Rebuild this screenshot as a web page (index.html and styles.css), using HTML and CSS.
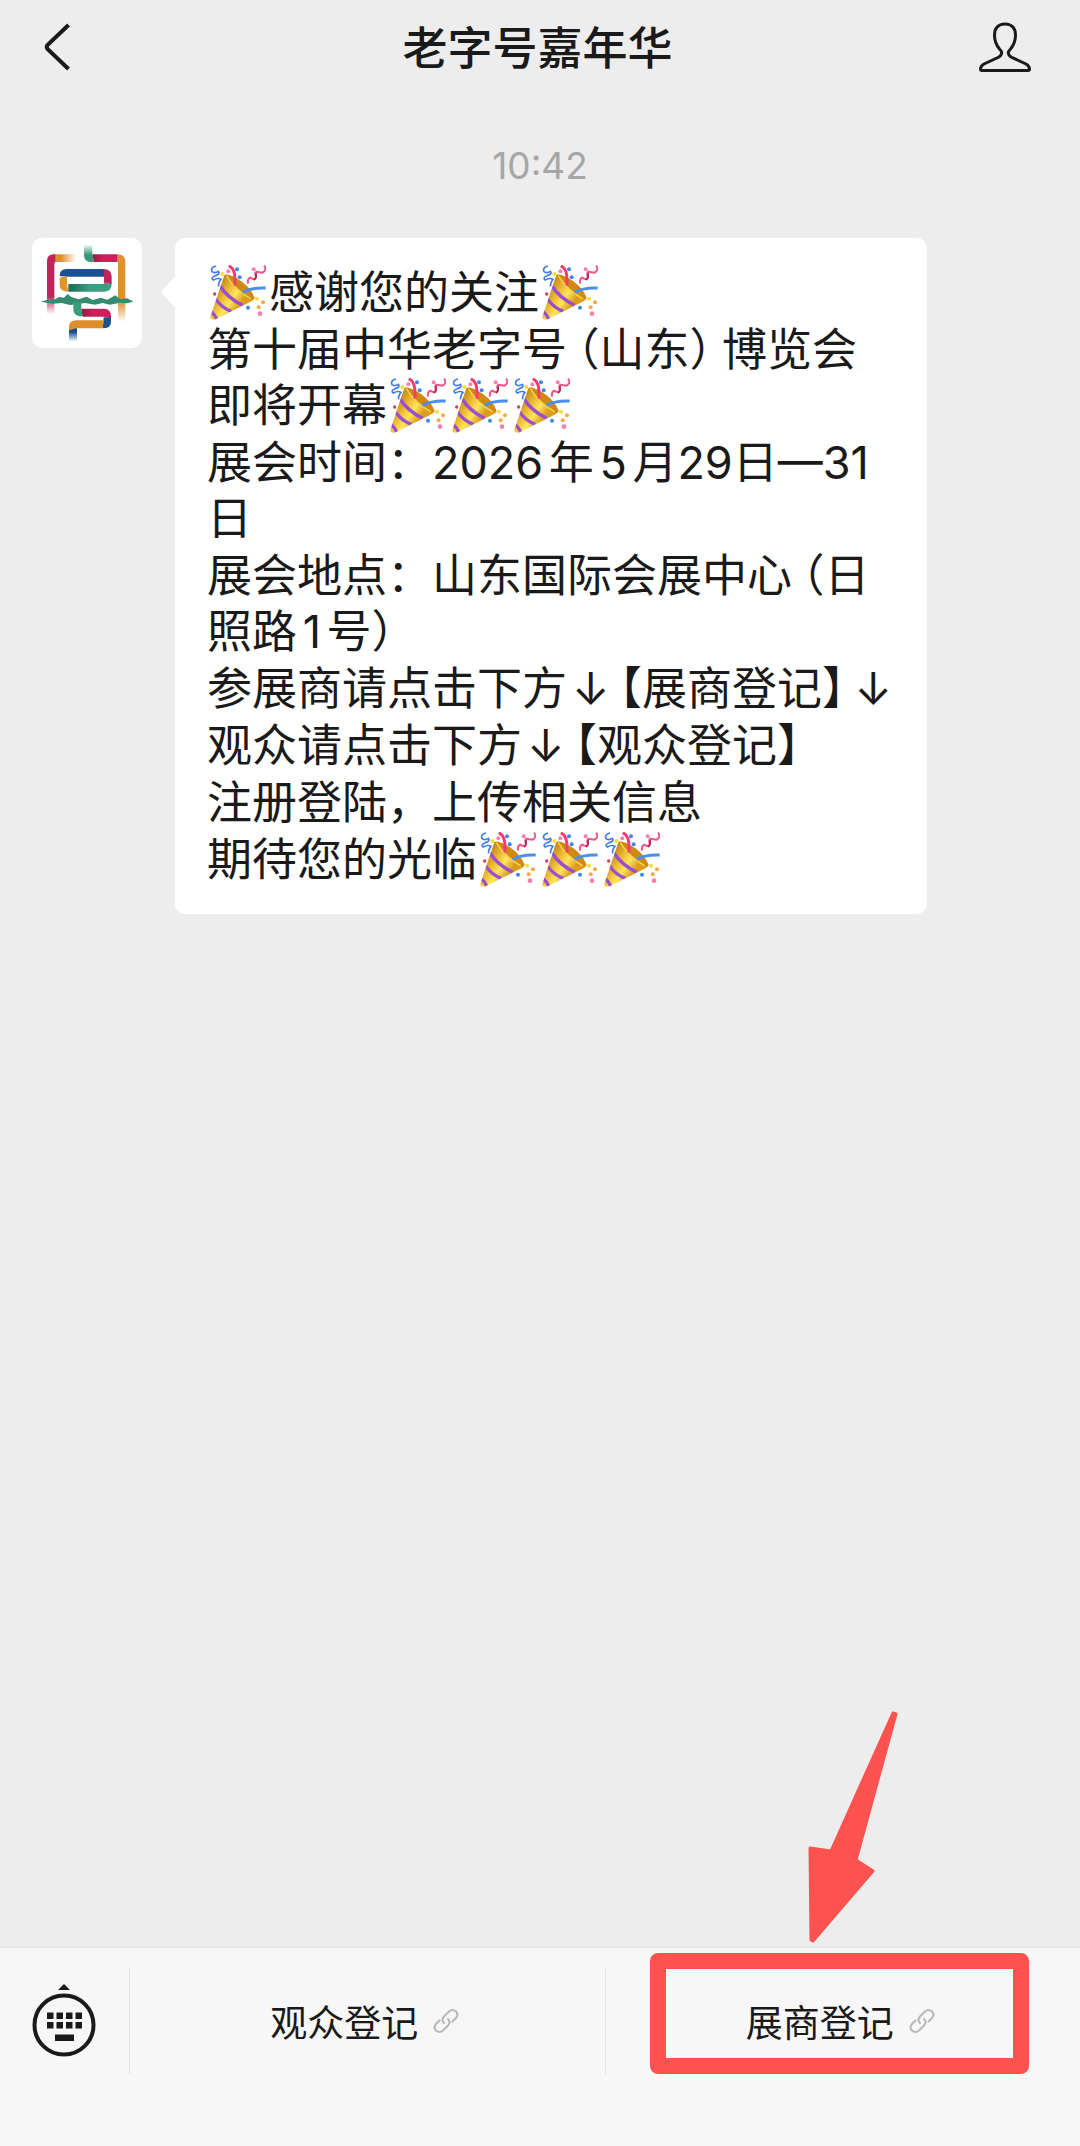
FILE: index.html
```html
<!DOCTYPE html>
<html lang="zh-CN">
<head>
    <meta charset="UTF-8">
    <meta name="viewport" content="width=device-width, initial-scale=1.0">
    <title>老字号嘉年华</title>
    <link rel="stylesheet" href="styles.css">
</head>
<body>
    <!-- 图标定义 -->
    <svg class="sprite" aria-hidden="true">
        <defs>
            <linearGradient id="cone" gradientUnits="userSpaceOnUse" x1="48" y1="105" x2="115" y2="150">
                <stop offset="0" stop-color="#c98f1c"/>
                <stop offset="0.35" stop-color="#eebc35"/>
                <stop offset="0.65" stop-color="#ffe65a"/>
                <stop offset="1" stop-color="#dc9d1e"/>
            </linearGradient>
            <clipPath id="coneClip">
                <path d="M71 58 L29 184 Q30 194 42 192 L154 136 Q160 133 161 127 Q130 104 112 80 Q92 62 71 58Z"/>
            </clipPath>
            <symbol id="popper" viewBox="28 28 168 168">
                <path d="M71 58 L29 184 Q30 194 42 192 L154 136 Q160 133 161 127 Q150 100 125 80 Q92 56 71 58Z" fill="url(#cone)"/>
                <path d="M73 56 Q94 57 122 77 Q152 99 162 127 Q158 134 148 128 Q108 108 73 56Z" fill="#cf8a13"/>
                <path d="M77 60 Q104 104 150 129" fill="none" stroke="#f8d452" stroke-width="4"/>
                <g clip-path="url(#coneClip)" fill="none" stroke="#9b4fd0" stroke-width="10">
                    <path d="M58 91 Q80 126 126 149"/>
                    <path d="M44 129 Q62 156 92 167"/>
                    <path d="M30 166 Q40 174 50 193"/>
                </g>
                <path d="M84 31 Q106 36 103 90" fill="none" stroke="#f43c6c" stroke-width="9"/>
                <path d="M126 110 Q152 95 195 97" fill="none" stroke="#4c8df0" stroke-width="9"/>
                <path d="M46 31 Q28 36 34 48 Q42 54 53 47 Q60 55 44 60 Q28 66 38 73 Q52 65 61 71 Q52 83 54 92" fill="none" stroke="#3d7ce8" stroke-width="5"/>
                <path d="M190 30 Q200 42 186 51 Q176 50 167 48 Q161 52 166 64 Q163 75 149 66 Q140 68 142 84" fill="none" stroke="#f2558a" stroke-width="6"/>
                <path d="M166 52 Q168 68 160 73" fill="none" stroke="#b62350" stroke-width="5"/>
                <g fill="#3f84ee">
                    <circle cx="109" cy="41" r="6"/>
                    <circle cx="117" cy="65" r="6"/>
                    <circle cx="142" cy="156" r="6"/>
                </g>
                <g fill="#f77fb4">
                    <circle cx="83" cy="47" r="6"/>
                    <circle cx="159" cy="41" r="6"/>
                    <circle cx="178" cy="174" r="7"/>
                </g>
                <circle cx="42" cy="115" r="5" fill="#e23763"/>
                <circle cx="65" cy="55" r="6" fill="#f6de35"/>
                <circle cx="169" cy="129" r="6" fill="#f6de35"/>
                <circle cx="187" cy="140" r="6" fill="#f7a93d"/>
                <circle cx="174" cy="155" r="6" fill="#f7a93d"/>
            </symbol>
            <symbol id="link" viewBox="0 0 26 26">
                <path d="M6.500 12.500 L3 16 Q0 19.500 3 22.500 Q6.500 25.500 10 22.500 L15 17.500 Q18 14 15 11 M11 15 Q8 12 11 8.500 L16 3.500 Q19.500 0.500 23 3.500 Q26 6.500 23 10 L19.500 13.500" fill="none" stroke="currentColor" stroke-width="2" stroke-linecap="round"/>
            </symbol>
        </defs>
    </svg>

    <header class="header">
        <button class="icon-btn" aria-label="返回">
            <svg class="back-icon" viewBox="0 0 26 48"><path d="M24.500 2 L3.500 22 Q2 24 3.500 26 L24.500 46" fill="none" stroke="currentColor" stroke-width="4"/></svg>
        </button>
        <h1 class="title">老字号嘉年华</h1>
        <button class="icon-btn" aria-label="公众号资料">
            <svg class="person-icon" viewBox="0 0 52 50"><path d="M26 2 C19 2 15.500 6.500 15.500 13 C15.500 19 17.500 23.500 20.500 27 C23.500 30 23.500 32.500 20 35 L5 42 C2.500 43.500 1.500 45 1.500 47 Q1.500 48.500 3 48.500 H49 Q50.500 48.500 50.500 47 C50.500 45 49.500 43.500 47 42 L32 35 C28.500 32.500 28.500 30 31.500 27 C34.500 23.500 36.500 19 36.500 13 C36.500 6.500 33 2 26 2Z" fill="none" stroke="currentColor" stroke-width="3"/></svg>
        </button>
    </header>

    <main class="chat">
        <time class="time">10:42</time>

        <div class="message">
            <svg class="avatar" viewBox="36 39 330 330" role="img" aria-label="老字号嘉年华">
                <defs>
                    <linearGradient id="fadeOrangeR"><stop offset="0.3" stop-color="#de8e2d"/><stop offset="1" stop-color="#de8e2d" stop-opacity="0"/></linearGradient>
                    <linearGradient id="fadeRed" x2="0" y2="1"><stop offset="0.7" stop-color="#c0225a"/><stop offset="1" stop-color="#c0225a" stop-opacity="0"/></linearGradient>
                    <linearGradient id="fadeOrange" x2="0" y2="1"><stop offset="0.7" stop-color="#e0902d"/><stop offset="1" stop-color="#e0902d" stop-opacity="0"/></linearGradient>
                    <linearGradient id="fadeGreen" x2="0" y2="1"><stop offset="0" stop-color="#36977a" stop-opacity="0"/><stop offset="0.6" stop-color="#36977a"/></linearGradient>
                    <linearGradient id="fadeBlue" x2="0" y2="1"><stop offset="0.3" stop-color="#17508f"/><stop offset="1" stop-color="#17508f" stop-opacity="0"/></linearGradient>
                    <linearGradient id="redBar"><stop offset="0" stop-color="#8f1d3f"/><stop offset="0.4" stop-color="#c9215a"/></linearGradient>
                    <linearGradient id="greenBar"><stop offset="0" stop-color="#1d6b54"/><stop offset="0.5" stop-color="#3a9e80"/></linearGradient>
                </defs>
                <path d="M103 88 H168 V111 H103Z" fill="url(#fadeOrangeR)"/>
                <path d="M81 268 V108 Q81 88 101 88 H106 V111 Q103 112 103 118 V268Z" fill="url(#fadeRed)"/>
                <path d="M192 58 H217 V88 L222 111 H212 Q192 111 192 91Z" fill="url(#fadeGreen)"/>
                <path d="M217 88 H293 V111 H222Z" fill="url(#redBar)"/>
                <path d="M293 88 Q316 88 316 111 V290 H294 V111Z" fill="url(#fadeOrange)"/>
                <path d="M119 153 Q119 132 140 132 H252 V155 H141Z" fill="#165296"/>
                <path d="M250 132 Q275 132 275 155 V178 L252 173 V155Z" fill="#c3225a"/>
                <path d="M252 173 L275 178 Q275 200 252 200 H145 V177 H252Z" fill="url(#greenBar)"/>
                <path d="M119 158 L141 153 V177 L145 200 Q119 200 119 180Z" fill="#e2952d"/>
                <path d="M62 230 L80 225 L98 226 L118 216 L132 218 L143 207 L154 216 L176 223 L200 215 L218 225 L242 218 L262 224 L286 211 L301 223 L322 220 L340 230 L320 235 L300 233 L270 239 L248 234 L225 239 L195 234 L150 240 L125 234 L100 236Z" fill="#338b70"/>
                <path d="M160 232 H184 V252 L188 274 H182 Q160 274 160 252Z" fill="#389c7c"/>
                <path d="M184 251 H252 Q273 251 273 274 V280 L252 275 H188Z" fill="url(#redBar)"/>
                <path d="M251 277 L273 277 V290 Q273 310 248 310Z" fill="#18528f"/>
                <path d="M147 320 V306 Q147 286 169 286 H252 L248 310 H170Z" fill="#dd8d2c"/>
                <path d="M147 316 L171 309 V350 H147Z" fill="url(#fadeBlue)"/>
            </svg>

            <div class="bubble">
                <p><svg class="emoji" role="img" aria-label="庆祝"><use href="#popper"/></svg>感谢您的关注<svg class="emoji" role="img" aria-label="庆祝"><use href="#popper"/></svg></p>
                <p>第十届中华老字号<span class="open">（</span>山东<span class="close">）</span>博览会即将开幕<svg class="emoji" role="img" aria-label="庆祝"><use href="#popper"/></svg><svg class="emoji" role="img" aria-label="庆祝"><use href="#popper"/></svg><svg class="emoji" role="img" aria-label="庆祝"><use href="#popper"/></svg></p>
                <p>展会时间：2026年5月<span class="tight">29日—31日</span></p>
                <p>展会地点：山东国际会展中心<span class="open">（</span>日照路1号<span class="close">）</span></p>
                <p>参展商请点击下方<span class="down">↓</span><span class="open">【</span>展商登记<span class="close">】</span>↓</p>
                <p>观众请点击下方<span class="down">↓</span><span class="open">【</span>观众登记<span class="close">】</span></p>
                <p>注册登陆，上传相关信息</p>
                <p>期待您的光临<svg class="emoji" role="img" aria-label="庆祝"><use href="#popper"/></svg><svg class="emoji" role="img" aria-label="庆祝"><use href="#popper"/></svg><svg class="emoji" role="img" aria-label="庆祝"><use href="#popper"/></svg></p>
            </div>
        </div>
    </main>

    <footer class="menu-bar">
        <button class="keyboard-btn" aria-label="切换键盘">
            <svg class="keyboard-icon" viewBox="0 0 64 74">
                <path d="M32 0 L38 6 H26Z" fill="currentColor"/>
                <circle cx="32" cy="41" r="29.500" fill="none" stroke="currentColor" stroke-width="4"/>
                <g fill="currentColor">
                    <rect x="15" y="28.500" width="6.500" height="6.500"/>
                    <rect x="24.500" y="28.500" width="6.500" height="6.500"/>
                    <rect x="34" y="28.500" width="6.500" height="6.500"/>
                    <rect x="43.500" y="28.500" width="6.500" height="6.500"/>
                    <rect x="15" y="38" width="6.500" height="6.500"/>
                    <rect x="24.500" y="38" width="6.500" height="6.500"/>
                    <rect x="34" y="38" width="6.500" height="6.500"/>
                    <rect x="43.500" y="38" width="6.500" height="6.500"/>
                    <rect x="23" y="50.500" width="19" height="6.500"/>
                </g>
            </svg>
        </button>
        <div class="menu-item">
            <button class="menu-btn">观众登记<svg class="link-icon"><use href="#link"/></svg></button>
        </div>
        <div class="menu-item">
            <button class="menu-btn">展商登记<svg class="link-icon"><use href="#link"/></svg></button>
            <!-- 红框和箭头提示 -->
            <div class="highlight">
                <svg class="arrow" viewBox="0 0 90 232"><path d="M85 2 L88 3 L48 149 L65 160 L5 230 L3 229 L2 137 L23 140Z" fill="currentColor" stroke="currentColor" stroke-width="3" stroke-linejoin="round"/></svg>
            </div>
        </div>
    </footer>
</body>
</html>
```

FILE: styles.css
```css
* {
    margin: 0;
    padding: 0;
    box-sizing: border-box;
}

body {
    min-height: 100vh;
    display: flex;
    flex-direction: column;
    background: #ededed;
    color: #1a1a1a;
    font-family: Inter, 'Noto Sans CJK SC', sans-serif;
}

button {
    border: none;
    background: none;
    color: inherit;
    font-family: inherit;
    cursor: pointer;
}

svg {
    display: block;
}

.sprite {
    position: absolute;
    width: 0;
    height: 0;
}

/* 顶部标题栏 */
.header {
    display: flex;
    align-items: center;
    justify-content: space-between;
    height: 98px;
    padding: 0 49px 0 44px;
}

.icon-btn {
    width: 52px;
    padding-bottom: 4px;
}

.back-icon {
    width: 26px;
    height: 48px;
}

.person-icon {
    width: 52px;
    height: 50px;
}

.title {
    font-size: 45px;
    font-weight: 500;
    line-height: 56px;
}

/* 聊天内容 */
.chat {
    flex: 1;
}

.time {
    display: block;
    margin: 40px 0 44px;
    text-align: center;
    font-size: 37px;
    line-height: 56px;
    color: #a6a6a6;
}

.message {
    display: flex;
    align-items: flex-start;
    gap: 33px;
    padding: 0 153px 0 32px;
}

.avatar {
    flex: none;
    width: 110px;
    height: 110px;
    border-radius: 10px;
    background: #fff;
}

.bubble {
    position: relative;
    flex: 1;
    display: flex;
    flex-direction: column;
    gap: 1px;
    padding: 27px 28px 26px 32px;
    border-radius: 10px;
    background: #fff;
    font-size: 45px;
    line-height: 56px;
    text-autospace: normal;
}

.bubble::before {
    content: '';
    position: absolute;
    top: 42px;
    left: -10px;
    width: 24px;
    height: 24px;
    border-radius: 4px;
    background: #fff;
    transform: rotate(45deg);
}

.emoji {
    display: inline-block;
    width: 56px;
    height: 56px;
    margin: -10px 3px;
    vertical-align: -2px;
}

/* 标点半宽 */
.open,
.close {
    font-feature-settings: 'halt';
}

.open {
    margin-left: 10px;
}

.close {
    margin-right: 10px;
}

.down {
    margin-left: 5px;
}

.tight {
    text-autospace: no-autospace;
}

/* 底部菜单 */
.menu-bar {
    display: flex;
    align-items: flex-start;
    padding: 20px 0 72px;
    border-top: 2px solid #e8e8e8;
    background: #f7f7f7;
}

.keyboard-btn {
    flex: none;
    width: 129px;
    height: 106px;
    padding: 0 32px;
}

.keyboard-icon {
    width: 64px;
    height: 74px;
}

.menu-item {
    position: relative;
    flex: 1;
    border-left: 1px solid #e2e2e2;
}

.menu-btn {
    display: flex;
    align-items: center;
    justify-content: center;
    gap: 15px;
    width: 100%;
    height: 106px;
    padding-right: 5px;
    font-size: 37px;
}

.link-icon {
    width: 26px;
    height: 26px;
    color: #b8b8b8;
}

.highlight {
    position: absolute;
    top: -15px;
    right: 51px;
    bottom: 0;
    left: 44px;
    border: 16px solid #fc5351;
    border-radius: 8px;
    color: #fc5351;
    pointer-events: none;
}

.arrow {
    position: absolute;
    bottom: calc(100% + 26px);
    left: 41%;
    width: 90px;
    height: 232px;
}
```
